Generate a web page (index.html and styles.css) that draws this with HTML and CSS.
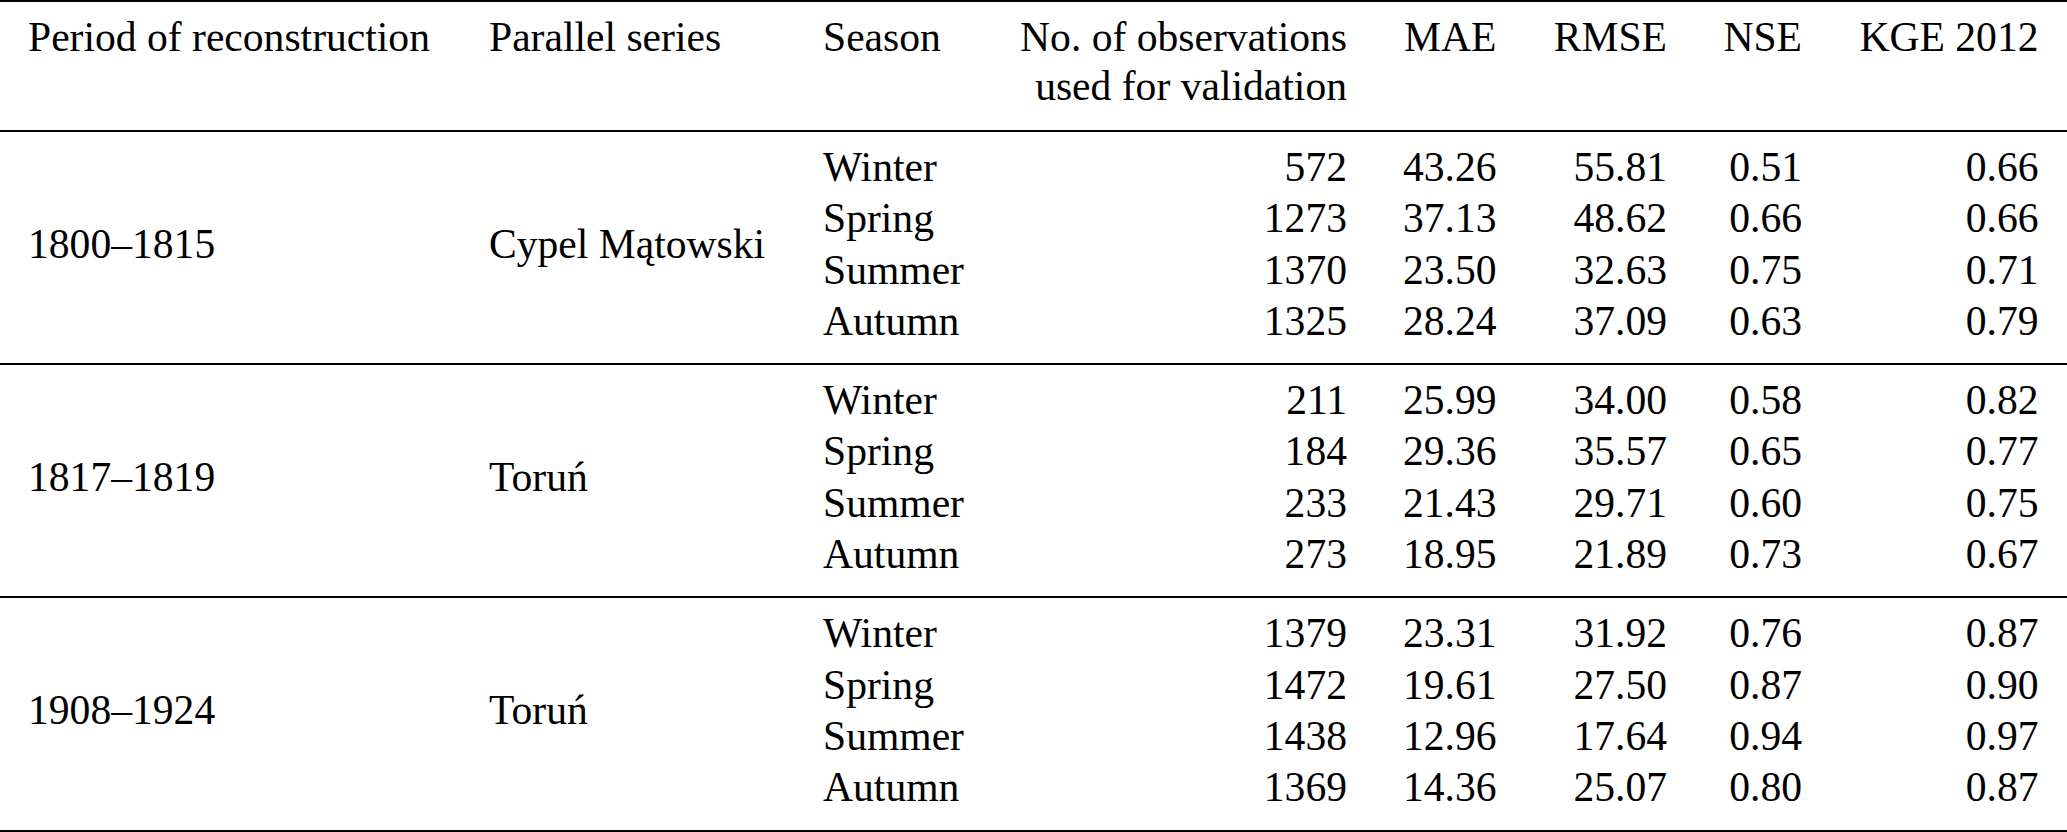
FILE: index.html
```html
<!DOCTYPE html>
<html lang="en">
<head>
<meta charset="utf-8">
<title>Validation statistics</title>
<link rel="stylesheet" href="styles.css">
</head>
<body>
<table class="stats">
  <colgroup>
    <col class="c-period">
    <col class="c-series">
    <col class="c-season">
    <col class="c-obs">
    <col class="c-mae">
    <col class="c-rmse">
    <col class="c-nse">
    <col class="c-kge">
  </colgroup>
  <thead>
    <tr>
      <th class="l first-col">Period of reconstruction</th>
      <th class="l">Parallel series</th>
      <th class="l">Season</th>
      <th class="r">No. of observations<br>used for validation</th>
      <th class="r">MAE</th>
      <th class="r">RMSE</th>
      <th class="r">NSE</th>
      <th class="r last-col">KGE 2012</th>
    </tr>
  </thead>
  <tbody>
    <tr class="top">
      <td class="l first-col grp" rowspan="4">1800–1815</td>
      <td class="l grp" rowspan="4">Cypel Mątowski</td>
      <td class="l">Winter</td><td class="r">572</td><td class="r">43.26</td><td class="r">55.81</td><td class="r">0.51</td><td class="r last-col">0.66</td>
    </tr>
    <tr>
      <td class="l">Spring</td><td class="r">1273</td><td class="r">37.13</td><td class="r">48.62</td><td class="r">0.66</td><td class="r last-col">0.66</td>
    </tr>
    <tr>
      <td class="l">Summer</td><td class="r">1370</td><td class="r">23.50</td><td class="r">32.63</td><td class="r">0.75</td><td class="r last-col">0.71</td>
    </tr>
    <tr class="bottom">
      <td class="l">Autumn</td><td class="r">1325</td><td class="r">28.24</td><td class="r">37.09</td><td class="r">0.63</td><td class="r last-col">0.79</td>
    </tr>
  </tbody>
  <tbody>
    <tr class="top">
      <td class="l first-col grp" rowspan="4">1817–1819</td>
      <td class="l grp" rowspan="4">Toruń</td>
      <td class="l">Winter</td><td class="r">211</td><td class="r">25.99</td><td class="r">34.00</td><td class="r">0.58</td><td class="r last-col">0.82</td>
    </tr>
    <tr>
      <td class="l">Spring</td><td class="r">184</td><td class="r">29.36</td><td class="r">35.57</td><td class="r">0.65</td><td class="r last-col">0.77</td>
    </tr>
    <tr>
      <td class="l">Summer</td><td class="r">233</td><td class="r">21.43</td><td class="r">29.71</td><td class="r">0.60</td><td class="r last-col">0.75</td>
    </tr>
    <tr class="bottom">
      <td class="l">Autumn</td><td class="r">273</td><td class="r">18.95</td><td class="r">21.89</td><td class="r">0.73</td><td class="r last-col">0.67</td>
    </tr>
  </tbody>
  <tbody>
    <tr class="top">
      <td class="l first-col grp" rowspan="4">1908–1924</td>
      <td class="l grp" rowspan="4">Toruń</td>
      <td class="l">Winter</td><td class="r">1379</td><td class="r">23.31</td><td class="r">31.92</td><td class="r">0.76</td><td class="r last-col">0.87</td>
    </tr>
    <tr>
      <td class="l">Spring</td><td class="r">1472</td><td class="r">19.61</td><td class="r">27.50</td><td class="r">0.87</td><td class="r last-col">0.90</td>
    </tr>
    <tr>
      <td class="l">Summer</td><td class="r">1438</td><td class="r">12.96</td><td class="r">17.64</td><td class="r">0.94</td><td class="r last-col">0.97</td>
    </tr>
    <tr class="bottom">
      <td class="l">Autumn</td><td class="r">1369</td><td class="r">14.36</td><td class="r">25.07</td><td class="r">0.80</td><td class="r last-col">0.87</td>
    </tr>
  </tbody>
</table>
</body>
</html>
```

FILE: styles.css
```css
html, body {
  margin: 0;
  padding: 0;
  background: #ffffff;
}

body {
  font-family: "Liberation Serif", "Times New Roman", serif;
  font-size: 41.6px;
  color: #000000;
}

.stats {
  width: 2067px;
  table-layout: fixed;
  border-collapse: separate;
  border-spacing: 0;
}

.c-period { width: 489px; }
.c-series { width: 334px; }
.c-season { width: 177px; }
.c-obs    { width: 347px; }
.c-mae    { width: 149.5px; }
.c-rmse   { width: 170.5px; }
.c-nse    { width: 135px; }
.c-kge    { width: 265px; }

.stats th,
.stats td {
  padding: 0;
  font-weight: normal;
  white-space: nowrap;
}

.stats th {
  line-height: 49px;
  vertical-align: top;
  padding-top: 11px;
  padding-bottom: 19px;
  border-top: 2px solid #000;
  border-bottom: 2px solid #000;
}

.stats td {
  line-height: 51.3px;
  vertical-align: baseline;
}

.l { text-align: left; }
.r { text-align: right; }

.first-col { padding-left: 28px !important; }
.last-col { padding-right: 28.5px !important; }

.stats tr.top td { padding-top: 10px; }
.stats tr.bottom td {
  padding-bottom: 16px;
  border-bottom: 2px solid #000;
}

.stats td.grp {
  vertical-align: middle;
  padding-top: 10px;
  padding-bottom: 16px;
  border-bottom: 2px solid #000;
}
```
